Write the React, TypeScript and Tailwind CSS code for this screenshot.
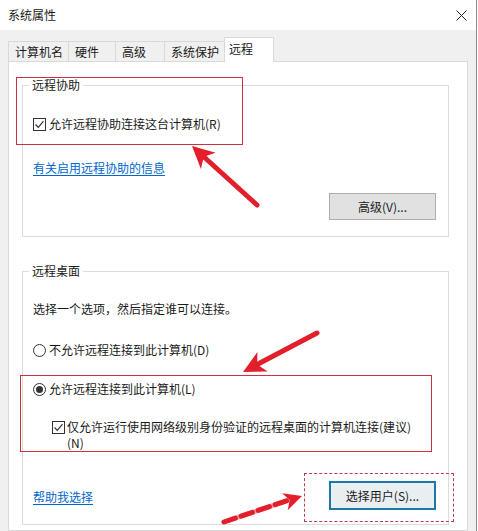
const font = { fontFamily: '"Noto Sans CJK SC", "Noto Sans", sans-serif' };

const tabs = [
  { label: '计算机名', w: 'w-[60px]' },
  { label: '硬件', w: 'w-[47px]' },
  { label: '高级', w: 'w-[49px]' },
  { label: '系统保护', w: 'w-[60px]' },
];

const CheckBox = () => (
  <span className="w-[13px] h-[13px] border border-[#333] bg-white flex items-center justify-center shrink-0">
    <svg width="11" height="11" viewBox="0 0 11 11">
      <path d="M1.5 5.5 L4.3 8.3 L9.5 2.2" fill="none" stroke="#333" strokeWidth="1.2" />
    </svg>
  </span>
);

const Radio = ({ checked }: { checked?: boolean }) => (
  <span className="w-[13px] h-[13px] rounded-full border border-[#333] bg-white flex items-center justify-center shrink-0">
    {checked && <span className="w-[7px] h-[7px] rounded-full bg-[#333]" />}
  </span>
);

const Link = ({ children }: { children: React.ReactNode }) => (
  <span className="text-[#0066cc] underline underline-offset-2 leading-4">{children}</span>
);

export default function App() {
  return (
    <div
      className="relative w-[477px] h-[531px] overflow-hidden bg-[#f0f0f0] border-r border-[#8a8a8a] flex flex-col text-[12px] text-[#1a1a1a]"
      style={font}
    >
      {/* title bar */}
      <div className="h-[30px] bg-white flex items-center justify-between pl-2 pr-[9px] shrink-0">
        <span className="leading-4">系统属性</span>
        <svg width="11" height="11" viewBox="0 0 11 11">
          <path d="M0.5 0.5 L10.5 10.5 M10.5 0.5 L0.5 10.5" stroke="#222" strokeWidth="1" />
        </svg>
      </div>

      {/* tab strip */}
      <div className="flex items-end pl-2 pt-[7px] shrink-0 relative z-10">
        {tabs.map((t) => (
          <div
            key={t.label}
            className={`${t.w} h-[20px] border-t border-l border-[#d9d9d9] flex items-center pl-[6px] pt-px leading-4`}
          >
            {t.label}
          </div>
        ))}
        <div className="w-[50px] h-[25px] -mb-px bg-white border-t border-x border-[#d9d9d9] flex items-center pl-[4px] pb-[2px] leading-4">
          远程
        </div>
      </div>

      {/* page body */}
      <div className="ml-2 w-[460px] flex-1 bg-white border border-[#d9d9d9] pl-[13px] pt-[15px]">
        <fieldset className="w-[427px] border border-[#dcdcdc] pl-[10px] pr-[12px] pb-[16px]">
          <legend className="-ml-1 px-[3px] leading-4">远程协助</legend>
          <div className="mt-[23px] flex items-center gap-[3px] leading-4">
            <CheckBox />
            <span>允许远程协助连接这台计算机(R)</span>
          </div>
          <div className="mt-[27px]">
            <Link>有关启用远程协助的信息</Link>
          </div>
          <div className="mt-[16px] flex justify-end">
            <button className="w-[107px] h-[27px] bg-[#e1e1e1] border border-[#adadad] leading-4">高级(V)...</button>
          </div>
        </fieldset>

        <fieldset className="mt-[26px] w-[427px] border border-[#dcdcdc] pl-[10px] pr-[12px] pb-[14px]">
          <legend className="-ml-1 px-[3px] leading-4">远程桌面</legend>
          <div className="mt-[22px] leading-4">选择一个选项，然后指定谁可以连接。</div>
          <div className="mt-[25px] flex items-center gap-[3px] leading-4">
            <Radio />
            <span>不允许远程连接到此计算机(D)</span>
          </div>
          <div className="mt-[23px] flex items-center gap-[3px] leading-4">
            <Radio checked />
            <span>允许远程连接到此计算机(L)</span>
          </div>
          <div className="mt-[22px] ml-[19px] flex items-start gap-[2px] leading-4">
            <span className="mt-[2px]">
              <CheckBox />
            </span>
            <span className="w-[350px]">仅允许运行使用网络级别身份验证的远程桌面的计算机连接(建议)(N)</span>
          </div>
          <div className="mt-[30px] flex items-center justify-between">
            <span className="mt-[3px]">
              <Link>帮助我选择</Link>
            </span>
            <button className="w-[107px] h-[29px] bg-[#e9eef1] border-2 border-[#1b79a8] leading-4">选择用户(S)...</button>
          </div>
        </fieldset>
      </div>

      {/* annotation boxes */}
      <div className="absolute left-[16px] top-[77px] w-[227px] h-[68px] border border-[#c8333f] pointer-events-none" />
      <div className="absolute left-[20px] top-[375px] w-[412px] h-[77px] border border-[#c8333f] pointer-events-none" />
      <div className="absolute left-[304px] top-[473px] w-[150px] h-[49px] border border-dashed border-[#b8404a] pointer-events-none" />

      {/* annotation arrows */}
      <svg className="absolute inset-0 pointer-events-none" width="478" height="531" viewBox="0 0 478 531">
        <line x1="257" y1="205" x2="204" y2="157" stroke="#e21f2b" strokeWidth="5" strokeLinecap="round" />
        <polygon points="192,146 215.7,152.7 203.8,156.8 200.9,168.9" fill="#e21f2b" />

        <line x1="317" y1="333" x2="258" y2="364" stroke="#e21f2b" strokeWidth="5" strokeLinecap="round" />
        <polygon points="243,372 257.4,352 257.2,364.5 267.6,371.4" fill="#e21f2b" />

        <line x1="224" y1="522" x2="289" y2="500" stroke="#f4a7ae" strokeWidth="5" strokeLinecap="round" />
        <line x1="224" y1="522" x2="289" y2="500" stroke="#e21f2b" strokeWidth="5" strokeLinecap="round" strokeDasharray="12 6" />
        <polygon points="302,496 282.1,493.2 289.7,500.1 287.7,510.2" fill="#e21f2b" />
      </svg>
    </div>
  );
}
